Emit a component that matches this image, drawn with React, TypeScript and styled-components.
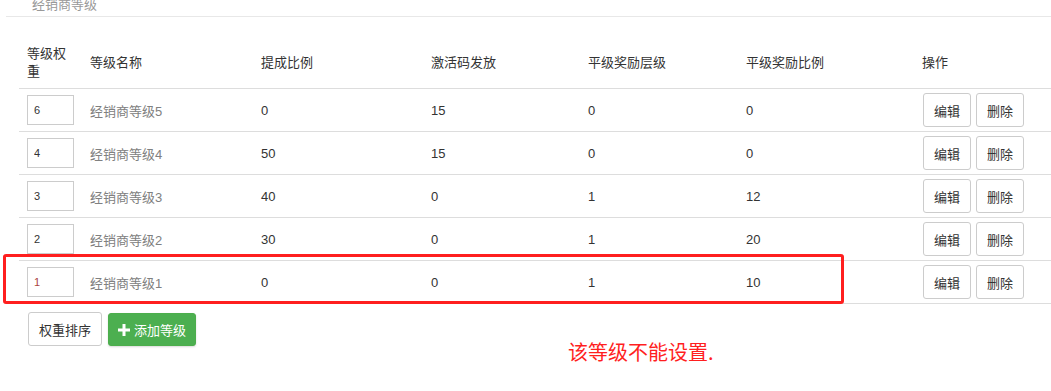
import React from "react";
import styled, { createGlobalStyle } from "styled-components";

const GlobalStyle = createGlobalStyle`
  html, body {
    margin: 0;
    padding: 0;
    background: #fff;
    overflow: hidden;
  }
  body {
    font-family: "Liberation Sans", "Noto Sans CJK SC", sans-serif;
    font-size: 13px;
    color: #333;
  }
`;

const Page = styled.div`
  position: relative;
  display: flow-root;
  width: 1051px;
  height: 391px;
  padding-left: 6px;
  box-sizing: border-box;
`;

const TitleBar = styled.div`
  margin-top: -7px;
  height: 23px;
  line-height: 23px;
  padding-left: 26px;
  color: #999;
  font-size: 13px;
  border-bottom: 1px solid #e8e8e8;
`;

const Table = styled.table`
  margin: 18px 0 0 13px;
  width: 1032px;
  border-collapse: collapse;
  table-layout: fixed;
`;

const HeadCell = styled.th`
  text-align: left;
  font-weight: normal;
  color: #333;
  padding: 10px 8px 7px;
  line-height: 18px;
  vertical-align: middle;
  border-bottom: 1px solid #ddd;
`;

const Row = styled.tr`
  border-top: 1px solid #ddd;
  &:last-child {
    border-bottom: 1px solid #ddd;
  }
`;

const Cell = styled.td<{ $muted?: boolean }>`
  padding: 4px 8px;
  height: 34px;
  vertical-align: middle;
  color: ${(p) => (p.$muted ? "#808080" : "#333")};
  white-space: nowrap;
`;

const WeightInput = styled.input<{ $tone?: string }>`
  box-sizing: border-box;
  width: 47px;
  height: 30px;
  border: 1px solid #ccc;
  padding: 0 6px;
  font-family: "Liberation Sans", sans-serif;
  font-size: 11px;
  color: ${(p) => p.$tone || "#333"};
  outline: none;
  display: block;
`;

const Actions = styled.div`
  display: flex;
  gap: 5px;
  padding-left: 1px;
`;

const Button = styled.button<{ $w?: number }>`
  box-sizing: border-box;
  height: 34px;
  width: ${(p) => p.$w ?? 48}px;
  padding: 0;
  border: 1px solid #ccc;
  border-radius: 3px;
  background: #fff;
  color: #333;
  font-family: "Noto Sans CJK SC", sans-serif;
  font-size: 13px;
  cursor: pointer;
`;

const SuccessButton = styled.button`
  box-sizing: border-box;
  height: 33px;
  width: 88px;
  margin-top: 1px;
  padding: 0;
  border: 1px solid #4cae4c;
  border-radius: 3px;
  background: #4caf50;
  color: #fff;
  font-family: "Noto Sans CJK SC", sans-serif;
  font-size: 13px;
  display: flex;
  align-items: center;
  justify-content: center;
  gap: 4px;
  box-shadow: 0 1px 2px rgba(0, 0, 0, 0.15);
`;

const Footer = styled.div`
  display: flex;
  gap: 6px;
  margin: 8px 0 0 22px;
  align-items: flex-start;
`;

const Highlight = styled.div`
  position: absolute;
  left: 3px;
  top: 254px;
  width: 841px;
  height: 50px;
  box-sizing: border-box;
  border: 3px solid #ff1f1f;
  border-radius: 3px;
  pointer-events: none;
`;

const Note = styled.div`
  position: absolute;
  left: 568px;
  top: 340px;
  font-family: "Noto Sans CJK SC", sans-serif;
  font-size: 20px;
  line-height: 24px;
  color: #ff1f1f;
  white-space: nowrap;
`;

const PlusIcon = () => (
  <svg width="12" height="12" viewBox="0 0 12 12">
    <path d="M4.5 0h3v4.5H12v3H7.5V12h-3V7.5H0v-3h4.5z" fill="#fff" />
  </svg>
);

type Level = {
  weight: number;
  name: string;
  commission: number;
  codes: number;
  depth: number;
  ratio: number;
  tone?: string;
};

const levels: Level[] = [
  { weight: 6, name: "经销商等级5", commission: 0, codes: 15, depth: 0, ratio: 0 },
  { weight: 4, name: "经销商等级4", commission: 50, codes: 15, depth: 0, ratio: 0 },
  { weight: 3, name: "经销商等级3", commission: 40, codes: 0, depth: 1, ratio: 12 },
  { weight: 2, name: "经销商等级2", commission: 30, codes: 0, depth: 1, ratio: 20 },
  { weight: 1, name: "经销商等级1", commission: 0, codes: 0, depth: 1, ratio: 10, tone: "#a94442" },
];

const columns = [63, 171, 170, 157, 158, 176, 137];

export default function App() {
  return (
    <>
      <GlobalStyle />
      <Page>
        <TitleBar>经销商等级</TitleBar>
        <Table>
          <colgroup>
            {columns.map((w, i) => (
              <col key={i} style={{ width: w }} />
            ))}
          </colgroup>
          <thead>
            <tr>
              <HeadCell>等级权重</HeadCell>
              <HeadCell>等级名称</HeadCell>
              <HeadCell>提成比例</HeadCell>
              <HeadCell>激活码发放</HeadCell>
              <HeadCell>平级奖励层级</HeadCell>
              <HeadCell>平级奖励比例</HeadCell>
              <HeadCell>操作</HeadCell>
            </tr>
          </thead>
          <tbody>
            {levels.map((l) => (
              <Row key={l.name}>
                <Cell>
                  <WeightInput defaultValue={l.weight} $tone={l.tone} />
                </Cell>
                <Cell $muted>{l.name}</Cell>
                <Cell>{l.commission}</Cell>
                <Cell>{l.codes}</Cell>
                <Cell>{l.depth}</Cell>
                <Cell>{l.ratio}</Cell>
                <Cell>
                  <Actions>
                    <Button>编辑</Button>
                    <Button>删除</Button>
                  </Actions>
                </Cell>
              </Row>
            ))}
          </tbody>
        </Table>
        <Footer>
          <Button $w={74}>权重排序</Button>
          <SuccessButton>
            <PlusIcon />
            添加等级
          </SuccessButton>
        </Footer>
        <Highlight />
        <Note>该等级不能设置.</Note>
      </Page>
    </>
  );
}
